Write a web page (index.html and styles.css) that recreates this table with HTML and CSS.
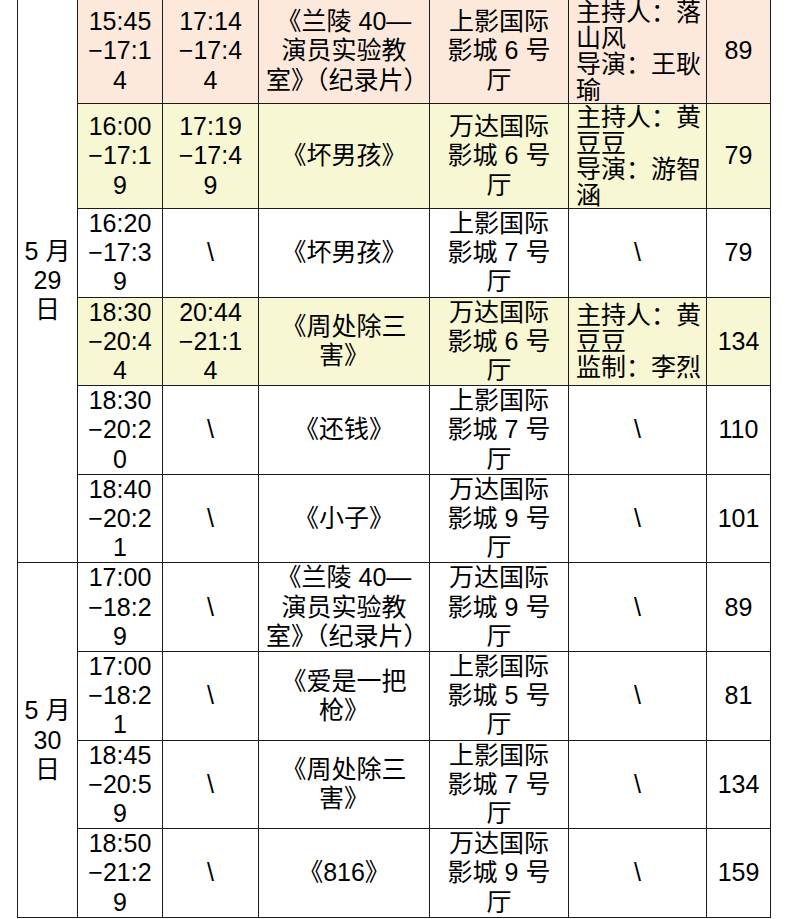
FILE: index.html
```html
<!DOCTYPE html>
<html lang="zh-CN">
<head>
<meta charset="utf-8">
<title>放映排片</title>
<link rel="stylesheet" href="styles.css">
</head>
<body>
<table class="schedule">
  <colgroup>
    <col class="c-date">
    <col class="c-start">
    <col class="c-end">
    <col class="c-title">
    <col class="c-cinema">
    <col class="c-guest">
    <col class="c-price">
  </colgroup>
  <tbody>
    <tr class="tall peach">
      <td class="date" rowspan="6">5 月 29 日</td>
      <td class="time start">15:45−17:14</td>
      <td class="time end">17:14−17:44</td>
      <td class="title">《兰陵 40—演员实验教室》（纪录片）</td>
      <td class="cinema">上影国际影城 6 号厅</td>
      <td class="guest">主持人：落山风<br>导演：王耿瑜</td>
      <td class="price">89</td>
    </tr>
    <tr class="tall yellow">
      <td class="time start">16:00−17:19</td>
      <td class="time end">17:19−17:49</td>
      <td class="title">《坏男孩》</td>
      <td class="cinema">万达国际影城 6 号厅</td>
      <td class="guest">主持人：黄豆豆<br>导演：游智涵</td>
      <td class="price">79</td>
    </tr>
    <tr>
      <td class="time start">16:20−17:39</td>
      <td class="none">\</td>
      <td class="title">《坏男孩》</td>
      <td class="cinema">上影国际影城 7 号厅</td>
      <td class="none">\</td>
      <td class="price">79</td>
    </tr>
    <tr class="yellow">
      <td class="time start">18:30−20:44</td>
      <td class="time end">20:44−21:14</td>
      <td class="title">《周处除三害》</td>
      <td class="cinema">万达国际影城 6 号厅</td>
      <td class="guest">主持人：黄豆豆<br>监制：李烈</td>
      <td class="price">134</td>
    </tr>
    <tr>
      <td class="time start">18:30−20:20</td>
      <td class="none">\</td>
      <td class="title">《还钱》</td>
      <td class="cinema">上影国际影城 7 号厅</td>
      <td class="none">\</td>
      <td class="price">110</td>
    </tr>
    <tr>
      <td class="time start">18:40−20:21</td>
      <td class="none">\</td>
      <td class="title">《小子》</td>
      <td class="cinema">万达国际影城 9 号厅</td>
      <td class="none">\</td>
      <td class="price">101</td>
    </tr>
    <tr>
      <td class="date" rowspan="4">5 月 30 日</td>
      <td class="time start">17:00−18:29</td>
      <td class="none">\</td>
      <td class="title">《兰陵 40—演员实验教室》（纪录片）</td>
      <td class="cinema">万达国际影城 9 号厅</td>
      <td class="none">\</td>
      <td class="price">89</td>
    </tr>
    <tr>
      <td class="time start">17:00−18:21</td>
      <td class="none">\</td>
      <td class="title">《爱是一把枪》</td>
      <td class="cinema">上影国际影城 5 号厅</td>
      <td class="none">\</td>
      <td class="price">81</td>
    </tr>
    <tr>
      <td class="time start">18:45−20:59</td>
      <td class="none">\</td>
      <td class="title">《周处除三害》</td>
      <td class="cinema">上影国际影城 7 号厅</td>
      <td class="none">\</td>
      <td class="price">134</td>
    </tr>
    <tr>
      <td class="time start">18:50−21:29</td>
      <td class="none">\</td>
      <td class="title">《816》</td>
      <td class="cinema">万达国际影城 9 号厅</td>
      <td class="none">\</td>
      <td class="price">159</td>
    </tr>
  </tbody>
</table>
</body>
</html>
```

FILE: styles.css
```css
html, body {
  margin: 0;
  padding: 0;
  background: #ffffff;
}

body {
  font-family: "Liberation Sans", "Noto Sans CJK SC", sans-serif;
  font-size: 25px;
  color: #000000;
}

.schedule {
  border-collapse: collapse;
  table-layout: fixed;
  width: 754px;
  margin: -2px 0 0 17px;
}

.c-date { width: 60px; }
.c-start { width: 85px; }
.c-end { width: 96px; }
.c-title { width: 171px; }
.c-cinema { width: 139px; }
.c-guest { width: 138px; }
.c-price { width: 64px; }

.schedule td {
  border: 1px solid #1c1c1c;
  padding: 0 4px;
  line-height: 29.2px;
  text-align: center;
  vertical-align: middle;
  word-break: normal;
}

.schedule tr.peach td:not(.date) { background: #fde9dc; }
.schedule tr.yellow td { background: #f7f7d3; }

.schedule td.date {
  background: #ffffff;
  padding: 0 4px;
}

.schedule td.time {
  line-break: anywhere;
  word-break: break-all;
}

.schedule td.start { padding: 0 8px; }
.schedule td.end { padding: 0 13px; }

.schedule td.title { padding: 0 7px; }
.schedule td.cinema { padding: 0 12px; }

.schedule td.guest {
  text-align: left;
  line-height: 26px;
  padding: 0 2px 0 7px;
}

.schedule td.price { padding: 0 2px; }
```
